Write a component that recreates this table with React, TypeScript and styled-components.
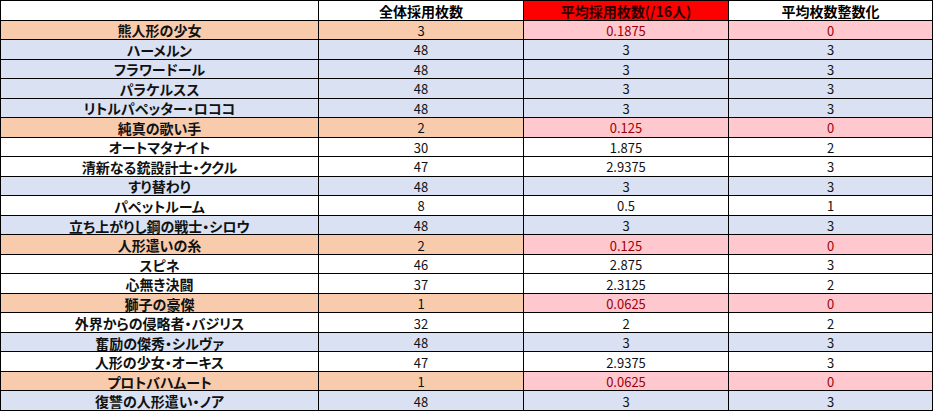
import React from "react";
import styled, { createGlobalStyle, css } from "styled-components";

const Global = createGlobalStyle`
  html, body { margin: 0; padding: 0; background: #ffffff; }
  body { font-family: "Noto Sans CJK JP", "Liberation Sans", sans-serif; }
`;

type Tone = "orange" | "blue" | "white";

const toneBg: Record<Tone, string> = {
  orange: "#F8CBAD",
  blue: "#D9E1F2",
  white: "#FFFFFF",
};

const Sheet = styled.div`
  display: grid;
  grid-template-columns: 317px 204px 204px 203px;
  grid-template-rows: repeat(21, 1fr);
  gap: 1px;
  padding: 1px;
  width: 933px;
  height: 411px;
  box-sizing: border-box;
  background: #000000;
`;

const HeaderCell = styled.div<{ $red?: boolean }>`
  display: flex;
  align-items: center;
  justify-content: center;
  background: ${(p) => (p.$red ? "#FF0000" : "#FFFFFF")};
  color: ${(p) => (p.$red ? "#2a0000" : "#000000")};
  font-size: 14px;
  font-weight: 700;
  line-height: 1;
  padding-top: 1px;
  font-feature-settings: "palt";
`;

const Cell = styled.div<{ $tone: Tone; $bad?: boolean; $name?: boolean }>`
  display: flex;
  align-items: center;
  justify-content: center;
  background: ${(p) => toneBg[p.$tone]};
  color: #111111;
  font-size: 13px;
  font-weight: 400;
  line-height: 1;
  padding-top: 1px;
  ${(p) =>
    p.$name &&
    css`
      font-size: 14px;
      font-weight: 700;
      font-feature-settings: "palt";
    `}
  ${(p) =>
    p.$bad &&
    css`
      background: #FFC7CE;
      color: #9C0006;
    `}
`;

type Row = { name: string; total: string; avg: string; rounded: string; tone: Tone };

const rows: Row[] = [
  { name: "熊人形の少女", total: "3", avg: "0.1875", rounded: "0", tone: "orange" },
  { name: "ハーメルン", total: "48", avg: "3", rounded: "3", tone: "blue" },
  { name: "フラワードール", total: "48", avg: "3", rounded: "3", tone: "blue" },
  { name: "パラケルスス", total: "48", avg: "3", rounded: "3", tone: "blue" },
  { name: "リトルパペッター・ロココ", total: "48", avg: "3", rounded: "3", tone: "blue" },
  { name: "純真の歌い手", total: "2", avg: "0.125", rounded: "0", tone: "orange" },
  { name: "オートマタナイト", total: "30", avg: "1.875", rounded: "2", tone: "white" },
  { name: "清新なる銃設計士・ククル", total: "47", avg: "2.9375", rounded: "3", tone: "white" },
  { name: "すり替わり", total: "48", avg: "3", rounded: "3", tone: "blue" },
  { name: "パペットルーム", total: "8", avg: "0.5", rounded: "1", tone: "white" },
  { name: "立ち上がりし鋼の戦士・シロウ", total: "48", avg: "3", rounded: "3", tone: "blue" },
  { name: "人形遣いの糸", total: "2", avg: "0.125", rounded: "0", tone: "orange" },
  { name: "スピネ", total: "46", avg: "2.875", rounded: "3", tone: "white" },
  { name: "心無き決闘", total: "37", avg: "2.3125", rounded: "2", tone: "white" },
  { name: "獅子の豪傑", total: "1", avg: "0.0625", rounded: "0", tone: "orange" },
  { name: "外界からの侵略者・バジリス", total: "32", avg: "2", rounded: "2", tone: "white" },
  { name: "奮励の傑秀・シルヴァ", total: "48", avg: "3", rounded: "3", tone: "blue" },
  { name: "人形の少女・オーキス", total: "47", avg: "2.9375", rounded: "3", tone: "white" },
  { name: "プロトバハムート", total: "1", avg: "0.0625", rounded: "0", tone: "orange" },
  { name: "復讐の人形遣い・ノア", total: "48", avg: "3", rounded: "3", tone: "blue" },
];

export default function App() {
  return (
    <>
      <Global />
      <Sheet>
        <HeaderCell />
        <HeaderCell>全体採用枚数</HeaderCell>
        <HeaderCell $red>平均採用枚数(/16人)</HeaderCell>
        <HeaderCell>平均枚数整数化</HeaderCell>
        {rows.map((r) => {
          const bad = r.tone === "orange";
          return (
            <React.Fragment key={r.name}>
              <Cell $tone={r.tone} $name>{r.name}</Cell>
              <Cell $tone={r.tone}>{r.total}</Cell>
              <Cell $tone={r.tone} $bad={bad}>{r.avg}</Cell>
              <Cell $tone={r.tone} $bad={bad}>{r.rounded}</Cell>
            </React.Fragment>
          );
        })}
      </Sheet>
    </>
  );
}
